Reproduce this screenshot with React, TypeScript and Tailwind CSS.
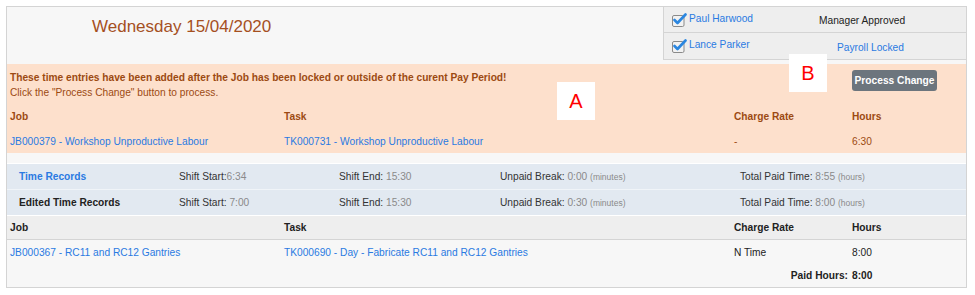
import React from 'react';

const font = { fontFamily: '"Liberation Sans", Arial, sans-serif' };

const CheckIcon = () => (
  <svg width="16" height="14" viewBox="0 0 16 14" className="shrink-0">
    <rect x="0.5" y="2.5" width="11.5" height="11" rx="1.5" fill="#f2f2f2" stroke="#8a8a8a" />
    <path d="M2.5 7 L5.5 10 L13.5 1.5" fill="none" stroke="#2a86e0" strokeWidth="2.6" strokeLinecap="round" strokeLinejoin="round" />
  </svg>
);

const Marker = ({ label }: { label: string }) => (
  <div className="absolute bg-white w-[38px] h-[38px] flex items-center justify-center text-[20px] leading-none text-[#ff0000]">
    {label}
  </div>
);

const Dim = ({ children }: { children: React.ReactNode }) => (
  <span className="text-[#8a8a8a]">{children}</span>
);

export default function App() {
  return (
    <div className="bg-white w-[975px] h-[295px] pt-[6px] pl-[6px]" style={font}>
      <div className="w-[961px] border border-[#d4d4d4] bg-[#f7f7f7] text-[10.2px] leading-[15px] relative">
        {/* header */}
        <div className="flex h-[57px]">
          <div className="flex-1 pl-[85px] pt-[10px] text-[17px] leading-[20px] text-[#a5501f]">Wednesday 15/04/2020</div>
          <div className="w-[303px] border-l border-b border-[#d4d4d4] bg-[#eeeeee] h-[53px] flex flex-col">
            <div className="flex h-[26px] border-b border-[#d4d4d4] items-center">
              <div className="w-[155px] pl-[8px] flex items-start gap-[1px] text-[#2a7ae2]">
                <CheckIcon />
                <span className="-mt-[2px]">Paul Harwood</span>
              </div>
              <div className="text-[#222] mt-[2px]">Manager Approved</div>
            </div>
            <div className="flex h-[26px] items-center">
              <div className="w-[173px] pl-[8px] flex items-start gap-[1px] text-[#2a7ae2]">
                <CheckIcon />
                <span className="-mt-[2px]">Lance Parker</span>
              </div>
              <div className="text-[#2a7ae2] mt-[2px]">Payroll Locked</div>
            </div>
          </div>
        </div>

        {/* locked entries */}
        <div className="bg-[#fde0cc] h-[89px] px-[3px] pt-[6px] text-[#9c4a12] relative">
          <div className="font-bold">These time entries have been added after the Job has been locked or outside of the curent Pay Period!</div>
          <div>Click the "Process Change" button to process.</div>
          <div className="flex mt-[9px] font-bold">
            <div className="w-[274px]">Job</div>
            <div className="w-[450px]">Task</div>
            <div className="w-[118px]">Charge Rate</div>
            <div>Hours</div>
          </div>
          <div className="flex mt-[10px]">
            <div className="w-[274px] text-[#2a7ae2]">JB000379 - Workshop Unproductive Labour</div>
            <div className="w-[450px] text-[#2a7ae2]">TK000731 - Workshop Unproductive Labour</div>
            <div className="w-[118px]">-</div>
            <div>6:30</div>
          </div>
          <button className="absolute left-[845px] top-[6px] h-[21px] w-[85px] rounded-[3px] bg-[#6c757d] text-white font-bold text-[10.2px]">
            Process Change
          </button>
          <div className="absolute left-[550px] top-[18px]">
            <Marker label="A" />
          </div>
          <div className="absolute left-[782px] top-[-10px]">
            <Marker label="B" />
          </div>
        </div>

        {/* time records */}
        <div className="mt-[10px] border-t border-white">
          <div className="flex items-center h-[26px] bg-[#e2e9f1] border-b border-[#f0f4f8] text-[#333]">
            <div className="w-[172px] pl-[12px] font-bold text-[#2a7ae2]">Time Records</div>
            <div className="w-[160px]">Shift Start:<Dim>6:34</Dim></div>
            <div className="w-[161px]">Shift End: <Dim>15:30</Dim></div>
            <div className="w-[240px]">Unpaid Break: <Dim>0:00 <span className="text-[8.5px]">(minutes)</span></Dim></div>
            <div>Total Paid Time: <Dim>8:55 <span className="text-[8.5px]">(hours)</span></Dim></div>
          </div>
          <div className="flex items-center h-[26px] bg-[#e2e9f1] border-b border-white text-[#333]">
            <div className="w-[172px] pl-[12px] font-bold text-[#222]">Edited Time Records</div>
            <div className="w-[160px]">Shift Start: <Dim>7:00</Dim></div>
            <div className="w-[161px]">Shift End: <Dim>15:30</Dim></div>
            <div className="w-[240px]">Unpaid Break: <Dim>0:30 <span className="text-[8.5px]">(minutes)</span></Dim></div>
            <div>Total Paid Time: <Dim>8:00 <span className="text-[8.5px]">(hours)</span></Dim></div>
          </div>
        </div>

        {/* job table */}
        <div className="flex items-center h-[24px] bg-[#eeeeee] border-b border-[#d4d4d4] px-[3px] font-bold text-[#222]">
          <div className="w-[274px]">Job</div>
          <div className="w-[450px]">Task</div>
          <div className="w-[118px]">Charge Rate</div>
          <div>Hours</div>
        </div>
        <div className="flex items-center h-[24px] px-[3px] text-[#222]">
          <div className="w-[274px] text-[#2a7ae2]">JB000367 - RC11 and RC12 Gantries</div>
          <div className="w-[450px] text-[#2a7ae2]">TK000690 - Day - Fabricate RC11 and RC12 Gantries</div>
          <div className="w-[118px]">N Time</div>
          <div>8:00</div>
        </div>
        <div className="flex items-center h-[23px] px-[3px] font-bold text-[#222]">
          <div className="w-[842px] text-right pr-[4px]">Paid Hours:</div>
          <div>8:00</div>
        </div>
      </div>
    </div>
  );
}
